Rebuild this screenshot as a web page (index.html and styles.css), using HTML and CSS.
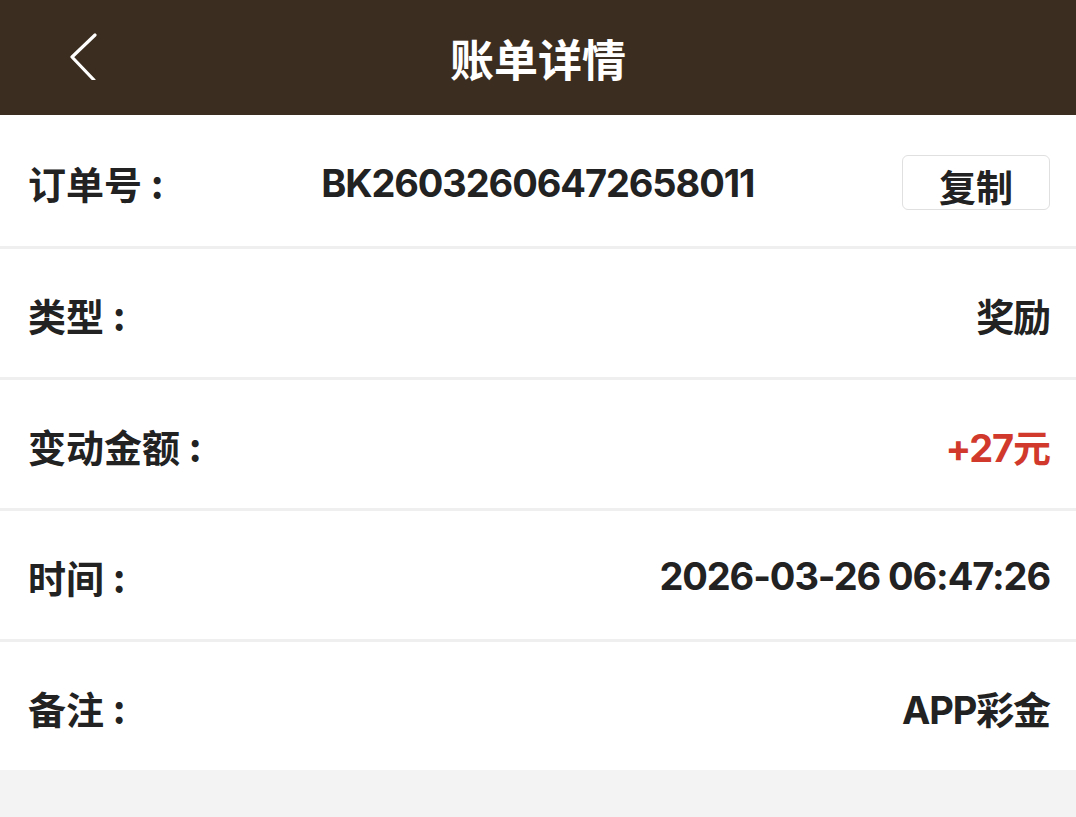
FILE: index.html
```html
<!DOCTYPE html>
<html lang="zh-CN">
<head>
    <meta charset="utf-8" />
    <title>账单详情</title>
    <link rel="stylesheet" href="styles.css">
</head>
<body>
<div class="topbar">
    <a class="back" href="#">
        <svg width="40" height="60" viewBox="0 0 40 60"><polyline points="32,15 9,37 31,60" fill="none" stroke="#fff" stroke-width="3.2" stroke-linecap="round" stroke-linejoin="round"/></svg>
    </a>
    <h1>账单详情</h1>
</div>
<dl class="detail">
    <div class="row">
        <dt>订单号<span class="colon">:</span></dt>
        <dd class="order">BK26032606472658011</dd>
        <button class="copy">复制</button>
    </div>
    <div class="row">
        <dt>类型<span class="colon">:</span></dt>
        <dd>奖励</dd>
    </div>
    <div class="row">
        <dt>变动金额<span class="colon">:</span></dt>
        <dd class="plus">+27元</dd>
    </div>
    <div class="row">
        <dt>时间<span class="colon">:</span></dt>
        <dd>2026-03-26 06:47:26</dd>
    </div>
    <div class="row">
        <dt>备注<span class="colon">:</span></dt>
        <dd>APP彩金</dd>
    </div>
</dl>
</body>
</html>
```

FILE: styles.css
```css
* {padding:0; margin:0; box-sizing:border-box}
body {background:#f3f3f3; font-family:"Inter", "Noto Sans CJK SC", sans-serif; color:#222}
.topbar {height:115px; background:#3b2d1f; display:flex; align-items:center; justify-content:center; position:relative}
.topbar h1 {color:#fff; font-size:44px; font-weight:bold; font-family:"Noto Sans CJK SC", sans-serif}
.back {position:absolute; left:63px; top:20px; display:block; width:40px; height:60px}
.back svg {display:block}
.detail {background:#fff}
.row {display:flex; align-items:center; height:131px; padding:2px 26px 0 28px; border-top:3px solid #efefef; font-weight:bold; font-size:38px}
.row:first-child {border-top:none; padding-top:4px}
.row dt {font-family:"Noto Sans CJK SC", sans-serif; white-space:nowrap}
.row .colon {margin-left:9px}
.row dd {flex:1; text-align:right; white-space:nowrap; letter-spacing:-1.1px}
.row dd.order {text-align:center; padding-left:10px}
.plus {color:#d0392b}
.copy {width:148px; height:55px; border:1px solid #e0e0e0; border-radius:6px; background:#fff; font:bold 37px "Noto Sans CJK SC", sans-serif; color:#222; padding-top:3px}
```
